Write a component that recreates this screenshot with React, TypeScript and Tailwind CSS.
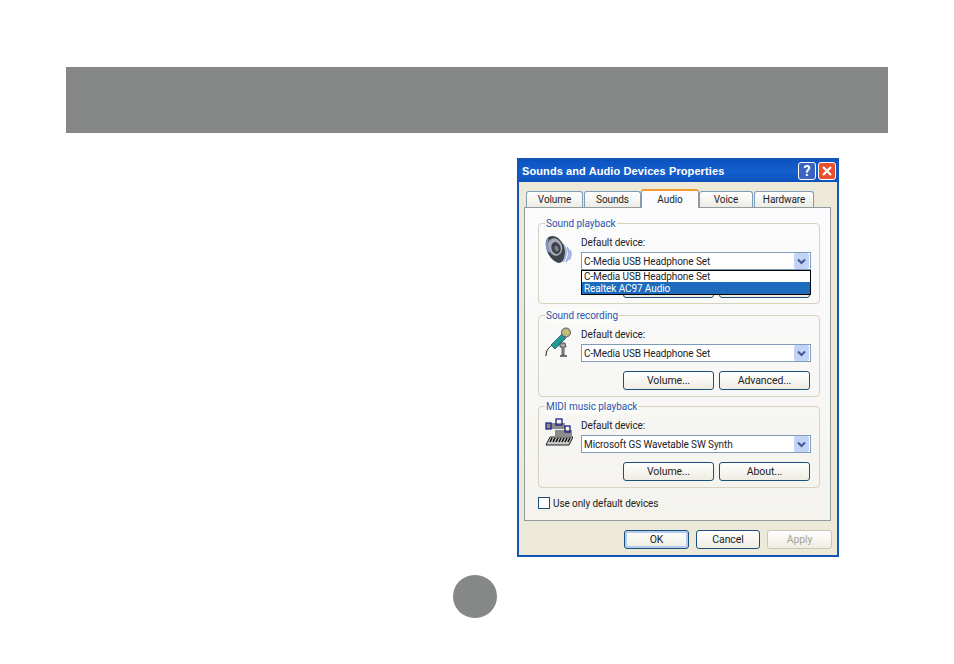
import type { ReactNode } from "react";

const tabs = ["Volume", "Sounds", "Audio", "Voice", "Hardware"];

function SpeakerIcon() {
  return (
    <svg width="28" height="30" viewBox="0 0 28 30">
      <path d="M18 9 q6 8 0 18 M22 12 q4 7 -1 15 M25 15 q2 5 -1 10" stroke="#9fb0dc" strokeWidth="1.8" fill="none" />
      <path d="M7 1 C13 1 19 7 20 16 C20 24 17 28 14 28 C9 27 2 21 1 11 C0 5 3 1 7 1 Z" fill="#3f434c" />
      <ellipse cx="10" cy="12" rx="7" ry="9" transform="rotate(-18 10 12)" fill="#a4a9b3" />
      <ellipse cx="11" cy="13" rx="4.5" ry="6" transform="rotate(-18 11 13)" fill="#3d414b" />
      <ellipse cx="11.5" cy="13.5" rx="2" ry="3" transform="rotate(-18 11.5 13.5)" fill="#777c88" />
      <path d="M3 4 q-3 7 1 13" stroke="#7f92cc" strokeWidth="2" fill="none" />
    </svg>
  );
}

function MicIcon() {
  return (
    <svg width="27" height="30" viewBox="0 0 27 30">
      <path d="M1 29 C1 23 4 20 9 17" stroke="#222" strokeWidth="1" fill="none" />
      <path d="M6 18 L17 7 L21 11 L10 22 Z" fill="#1f9a94" stroke="#0d4f50" strokeWidth="0.7" />
      <circle cx="21" cy="5.5" r="4.5" fill="#b9b78a" stroke="#555" strokeWidth="1" />
      <circle cx="22" cy="5" r="1.5" fill="#e4c933" />
      <path d="M15 16 h5 l1 4 h-2 v8 h-2 v-8 h-2 Z" fill="#a4a7aa" stroke="#333" strokeWidth="0.8" />
      <path d="M15 29 h7" stroke="#444" strokeWidth="1.5" />
    </svg>
  );
}

function MidiIcon() {
  return (
    <svg width="28" height="28" viewBox="0 0 28 28">
      <path d="M1 6 h19 M1 8 h19 M1 10 h19" stroke="#222" strokeWidth="1" />
      <path d="M10 13 h17 M10 15 h17 M10 17 h17" stroke="#222" strokeWidth="1" />
      <rect x="1" y="5" width="5" height="6" fill="none" stroke="#1b1f8a" strokeWidth="1.3" />
      <rect x="11" y="1" width="6" height="6" fill="none" stroke="#1b1f8a" strokeWidth="1.3" />
      <rect x="20" y="8" width="5" height="6" fill="none" stroke="#1b1f8a" strokeWidth="1.3" />
      <path d="M5 19 h23 l-4 8 h-23 Z" fill="#c9c9c9" stroke="#222" strokeWidth="1" />
      <path d="M7 20 l-2 4 M10 20 l-2 4 M13 20 l-2 4 M16 20 l-2 4 M19 20 l-2 4 M22 20 l-2 4 M25 20 l-2 4" stroke="#111" strokeWidth="1.6" />
    </svg>
  );
}

function XpButton({ children, width, primary, disabled }: { children?: ReactNode; width: string; primary?: boolean; disabled?: boolean }) {
  return (
    <div
      className={`${width} flex h-[19px] items-center justify-center rounded-[3px] border bg-gradient-to-b from-white to-[#eeece2] text-[10.5px] tracking-[-0.1px] ${
        disabled
          ? "border-[#c9c7ba] text-[#a5a498]"
          : primary
          ? "border-[#1d4f7c] text-[#222] shadow-[inset_0_0_0_2px_#b4cdee]"
          : "border-[#1d4f7c] text-[#222]"
      }`}
    >
      {children}
    </div>
  );
}

function Combo({ value }: { value: string }) {
  return (
    <div className="flex h-[18px] w-[230px] items-center justify-between border border-[#7f9db9] bg-white pl-[2px] pr-px text-[10px] tracking-[-0.1px] text-[#222]">
      <span>{value}</span>
      <div className="flex h-[16px] w-[15px] items-center justify-center rounded-[2px] bg-[#c3d3f5]">
        <svg width="9" height="7" viewBox="0 0 9 7">
          <path d="M1 1.5 L4.5 5 L8 1.5" stroke="#3d5a94" strokeWidth="2" fill="none" />
        </svg>
      </div>
    </div>
  );
}

function Group({
  title,
  icon,
  value,
  height,
  buttons,
  children,
}: {
  title: string;
  icon: ReactNode;
  value: string;
  height: string;
  buttons: string[];
  children?: ReactNode;
}) {
  return (
    <div className={`relative ${height} w-[282px] rounded-[4px] border border-[#d5d2bf]`}>
      <span className="absolute left-[6px] top-[-7px] bg-[#fbfbf8] px-px text-[10px] leading-[14px] tracking-[-0.05px] text-[#2a55b0]">
        {title}
      </span>
      <div className="flex">
        <div className="w-[42px] pl-[6px] pt-[11px]">{icon}</div>
        <div className="relative w-[230px] pt-[11px]">
          <div className="h-[17px] text-[10px] leading-[16px] tracking-[-0.1px] text-[#222]">Default device:</div>
          <Combo value={value} />
          <div className="mt-[9px] flex justify-end gap-[5px] pr-px">
            <XpButton width="w-[91px]">{buttons[0]}</XpButton>
            <XpButton width="w-[91px]">{buttons[1]}</XpButton>
          </div>
          {children}
        </div>
      </div>
    </div>
  );
}

export default function App() {
  return (
    <div className="min-h-[664px] w-[954px] bg-white pl-[66px] pt-[67px] font-['Roboto','Liberation_Sans',Arial,sans-serif]">
      <div className="h-[66px] w-[822px] bg-[#858886]" />

      <div className="ml-[451px] mt-[25px] h-[399px] w-[322px] border-2 border-[#1355b4] bg-[#ece9d8]">
        {/* title bar */}
        <div className="flex h-[22px] items-center justify-between bg-gradient-to-b from-[#0b52bf] via-[#1460ce] to-[#0d52bd] pl-[3px] pr-px">
          <span className="font-['Liberation_Sans',Arial,sans-serif] text-[11px] font-bold tracking-[0.1px] text-white">Sounds and Audio Devices Properties</span>
          <div className="flex gap-[2px]">
            <div className="flex h-[18px] w-[18px] items-center justify-center rounded-[3px] border border-white bg-[#3a63c0] text-[14px] font-bold leading-none text-white">
              ?
            </div>
            <div className="flex h-[18px] w-[18px] items-center justify-center rounded-[3px] border border-white bg-[#e8502e]">
              <svg width="12" height="12" viewBox="0 0 12 12">
                <path d="M2 2 L10 10 M10 2 L2 10" stroke="white" strokeWidth="2.2" />
              </svg>
            </div>
          </div>
        </div>

        {/* body */}
        <div className="pl-[5px] pt-[7px]">
          <div className="flex items-end pl-[2px]">
            {tabs.map((t) =>
              t === "Audio" ? (
                <div
                  key={t}
                  className="relative z-10 mb-[-1px] flex h-[19px] w-[58px] items-start justify-center rounded-t-[3px] border-x border-t-2 border-[#919b9c] border-t-[#ee9a2d] bg-[#fcfcfe] pt-[1px] text-[10px] tracking-[-0.1px] text-[#222]"
                >
                  {t}
                </div>
              ) : (
                <div
                  key={t}
                  className={`flex h-[16px] items-center justify-center rounded-t-[3px] border-x border-t border-[#7f9db9] bg-gradient-to-b from-white to-[#ecebe4] text-[10px] tracking-[-0.1px] text-[#222] ${
                    t === "Hardware" ? "ml-px w-[60px]" : t === "Volume" ? "mr-px w-[57px]" : t === "Sounds" ? "w-[57px]" : "w-[54px]"
                  }`}
                >
                  {t}
                </div>
              )
            )}
          </div>

          <div className="flex h-[314px] w-[307px] flex-col border border-[#919b9c] bg-gradient-to-b from-[#fcfcfe] to-[#f4f3ee] pl-[13px] pt-[15px]">
            <Group title="Sound playback" icon={<SpeakerIcon />} value="C-Media USB Headphone Set" height="h-[81px]" buttons={["", ""]}>
              {/* open dropdown list */}
              <div className="absolute left-0 top-[46px] h-[25px] w-[230px] border border-black bg-white text-[10px] tracking-[-0.1px] text-[#222]">
                <div className="h-[11px] pl-[2px] pt-px leading-[10px]">C-Media USB Headphone Set</div>
                <div className="h-[12px] bg-[#1c6bbd] pl-[2px] pt-px leading-[11px] text-white">Realtek AC97 Audio</div>
              </div>
            </Group>
            <div className="mt-[11px]">
              <Group title="Sound recording" icon={<MicIcon />} value="C-Media USB Headphone Set" height="h-[82px]" buttons={["Volume...", "Advanced..."]} />
            </div>
            <div className="mt-[9px]">
              <Group title="MIDI music playback" icon={<MidiIcon />} value="Microsoft GS Wavetable SW Synth" height="h-[82px]" buttons={["Volume...", "About..."]} />
            </div>
            <div className="mt-[9px] flex items-start gap-[3px]">
              <div className="h-[12px] w-[12px] border border-[#1d4f7c] bg-white" />
              <span className="pt-px text-[10px] leading-[12px] tracking-[-0.1px] text-[#222]">Use only default devices</span>
            </div>
          </div>

          <div className="mt-[9px] flex justify-end gap-[7px] pr-[5px]">
            <XpButton width="w-[65px]" primary>OK</XpButton>
            <XpButton width="w-[64px]">Cancel</XpButton>
            <XpButton width="w-[65px]" disabled>Apply</XpButton>
          </div>
        </div>
      </div>

      <div className="ml-[387px] mt-[18px] h-[43px] w-[44px] rounded-full bg-[#858886]" />
    </div>
  );
}
